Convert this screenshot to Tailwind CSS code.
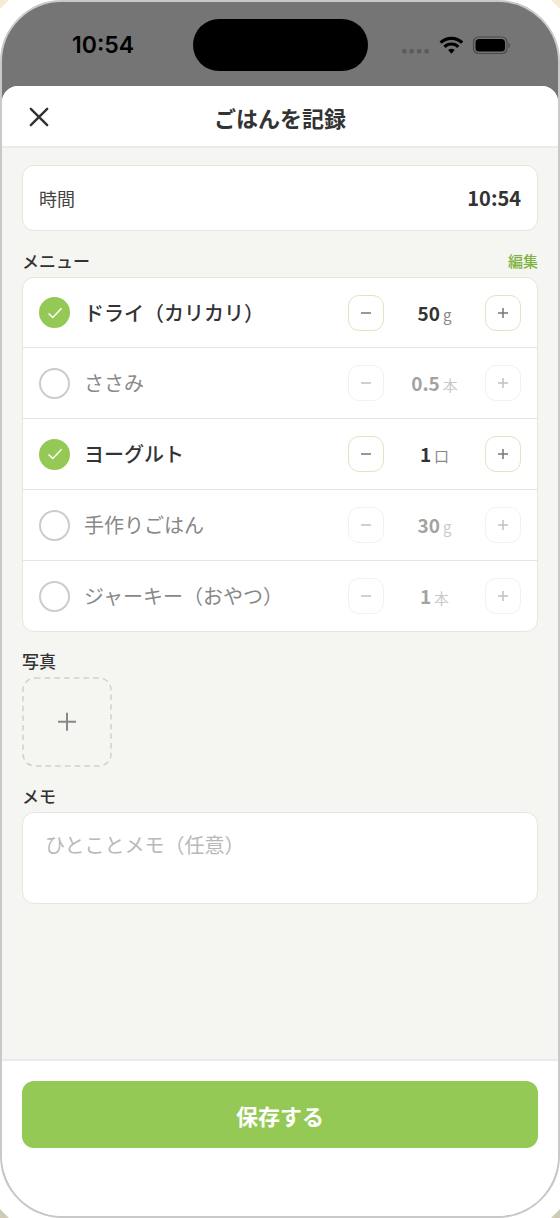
<!DOCTYPE html>
<html lang="ja">
<head>
<meta charset="utf-8">
<meta name="viewport" content="width=device-width, initial-scale=1">
<title>ごはんを記録</title>
<script src="https://cdn.jsdelivr.net/npm/@tailwindcss/browser@4"></script>
</head>
<body class="bg-linear-to-b from-[#f5ecd6] to-[#d0c9b4] font-['Noto_Sans_CJK_JP',sans-serif] text-[#333333]">
<div class="flex min-h-screen flex-col bg-white [clip-path:polygon(9px_0,calc(100%-9px)_0,100%_9px,100%_calc(100%-9px),calc(100%-9px)_100%,9px_100%,0_calc(100%-9px),0_9px)]">
  <div class="flex grow flex-col overflow-hidden rounded-[62px] border-2 border-[#c9c9c9] bg-[#757575]">
    <!-- Status bar -->
    <div class="grid h-[84px] grid-cols-[1fr_175px_1fr] items-center pt-[2px]">
      <div class="pl-[70px] font-['Inter',sans-serif] text-[23px] font-semibold text-black">10:54</div>
      <div class="h-[52px] rounded-full bg-black"></div>
      <div class="flex items-center justify-end pr-[47px]">
        <svg class="h-5 w-28" viewBox="0 0 112 20" role="img" aria-label="Wi-Fi、バッテリー">
          <g fill="#5c5c5c"><rect x="3" y="14" width="4.600" height="4.600" rx="1.500"/><rect x="10.400" y="14" width="4.600" height="4.600" rx="1.500"/><rect x="17.900" y="14" width="4.600" height="4.600" rx="1.500"/><rect x="25.300" y="14" width="4.600" height="4.600" rx="1.500"/></g>
          <g fill="none" stroke="#000" stroke-width="3.2"><path d="M41.6 7.7a15.500 15.500 0 0 1 21.600 0"/><path d="M45.500 11.800a9.900 9.900 0 0 1 13.800 0"/></g>
          <path d="M49.100 15.100a5 5 0 0 1 6.600 0l-3.300 3.600z"/>
          <rect x="74.500" y="2" width="33.500" height="16.500" rx="5" fill="none" stroke="#4a4a4a" stroke-width="1.200"/>
          <rect x="76.500" y="4" width="29.500" height="12.600" rx="3.600"/>
          <path d="M109.500 8v5c2-.6 2-4.400 0-5z" fill="#4a4a4a"/>
        </svg>
      </div>
    </div>

    <main class="flex grow flex-col overflow-hidden rounded-t-[16px] bg-[#f5f5f1]">
      <header class="grid h-[62px] grid-cols-[1fr_auto_1fr] items-center border-b-2 border-[#ebebea] bg-white px-6 pt-px">
        <button type="button" aria-label="閉じる" class="grid size-[26px] place-items-center">
          <svg class="size-5" viewBox="0 0 20 20" fill="none" stroke="#333" stroke-width="2.400" stroke-linecap="round"><path d="M1.800 1.800l16.400 16.400M18.200 1.800L1.800 18.200"/></svg>
        </button>
        <h1 class="text-[22px] leading-8 font-bold">ごはんを記録</h1>
      </header>

      <form class="flex grow flex-col">
        <div class="flex grow flex-col px-5 pt-[17px]">
          <div class="flex h-[66px] items-center justify-between rounded-xl border border-[#e5e5e4] bg-white px-4">
            <label for="time" class="text-lg text-[#444444]">時間</label>
            <input id="time" type="text" value="10:54" class="w-24 text-right text-xl font-bold outline-none">
          </div>

          <section>
            <div class="mt-[15px] mb-px flex h-[30px] items-center justify-between">
              <h2 class="text-[17px] font-medium">メニュー</h2>
              <a href="#" class="text-[15px] font-medium text-[#7db33f]">編集</a>
            </div>
            <ul class="divide-y divide-[#e5e5e4] rounded-xl border border-[#e5e5e4] bg-white" id="menu"></ul>
          </section>

          <section>
            <h2 class="mt-[15px] mb-[2px] flex h-7 items-center text-[17px] font-medium">写真</h2>
            <button type="button" aria-label="写真を追加" class="block">
              <svg class="size-[90px]" viewBox="0 0 90 90" fill="none">
                <rect x="1" y="1" width="88" height="88" rx="12" stroke="#cfcfcc" stroke-width="1.500" stroke-dasharray="5.500 4.200"/>
                <path d="M36 44.800h18M45 35.800v18" stroke="#888" stroke-width="2"/>
              </svg>
            </button>
          </section>

          <section>
            <label for="memo" class="mt-[15px] mb-[2px] flex h-7 items-center text-[17px] font-medium">メモ</label>
            <textarea id="memo" placeholder="ひとことメモ（任意）" class="block h-[92px] w-full resize-none rounded-xl border border-[#e5e5e4] bg-white px-[22px] py-4 text-xl leading-8 outline-none placeholder:text-[#b8b8b8]"></textarea>
          </section>
        </div>

        <footer class="border-t-2 border-[#ebebea] bg-white px-5 pt-5 pb-[68px]">
          <button type="submit" class="h-[67px] w-full rounded-xl bg-[#93c954] pt-[2px] text-[22px] font-bold text-white">保存する</button>
        </footer>
      </form>
    </main>
  </div>
</div>

<template id="row">
  <li class="group flex h-[71px] items-center px-4 first:h-[70px] last:h-[70px]">
    <label class="flex grow items-center gap-[14px]">
      <span class="grid size-[31px] shrink-0 place-items-center">
        <input type="checkbox" class="peer col-start-1 row-start-1 size-[31px] appearance-none rounded-full border-2 border-[#cccccc] bg-white checked:border-[#93c954] checked:bg-[#93c954]">
        <svg class="pointer-events-none invisible col-start-1 row-start-1 h-3 w-4 peer-checked:visible" viewBox="0 0 16 12" fill="none" stroke="#fff" stroke-width="1.500"><path d="M1.500 6.500l4.300 4L14.600 1.300"/></svg>
      </span>
      <span data-name class="text-xl text-[#888888] group-has-checked:font-medium group-has-checked:text-[#333333]"></span>
    </label>
    <div class="flex items-center opacity-45 group-has-checked:opacity-100">
      <button type="button" aria-label="減らす" class="grid size-9 place-items-center rounded-[11px] border border-[#e2e2e2] group-has-checked:border-[#d7eabf]">
        <svg class="size-3" viewBox="0 0 12 12" stroke="#777" stroke-width="1.500"><path d="M1 6h10"/></svg>
      </button>
      <div class="flex w-[101px] items-baseline justify-center gap-[3px] pt-px">
        <span data-value class="text-[19px] font-bold"></span><span data-unit class="text-[15px] text-[#888888]"></span>
      </div>
      <button type="button" aria-label="増やす" class="grid size-9 place-items-center rounded-[11px] border border-[#e2e2e2] group-has-checked:border-[#d7eabf]">
        <svg class="size-3" viewBox="0 0 12 12" stroke="#777" stroke-width="1.500"><path d="M1 6h10M6 1v10"/></svg>
      </button>
    </div>
  </li>
</template>
<script>
  const items = [
    ['ドライ（カリカリ）', '50', 'g', true],
    ['ささみ', '0.5', '本', false],
    ['ヨーグルト', '1', '口', true],
    ['手作りごはん', '30', 'g', false],
    ['ジャーキー（おやつ）', '1', '本', false],
  ];
  const menu = document.getElementById('menu');
  for (const [name, value, unit, on] of items) {
    const row = document.getElementById('row').content.cloneNode(true);
    row.querySelector('[data-name]').textContent = name;
    row.querySelector('[data-value]').textContent = value;
    row.querySelector('[data-unit]').textContent = unit;
    row.querySelector('input').checked = on;
    menu.append(row);
  }
</script>
</body>
</html>
